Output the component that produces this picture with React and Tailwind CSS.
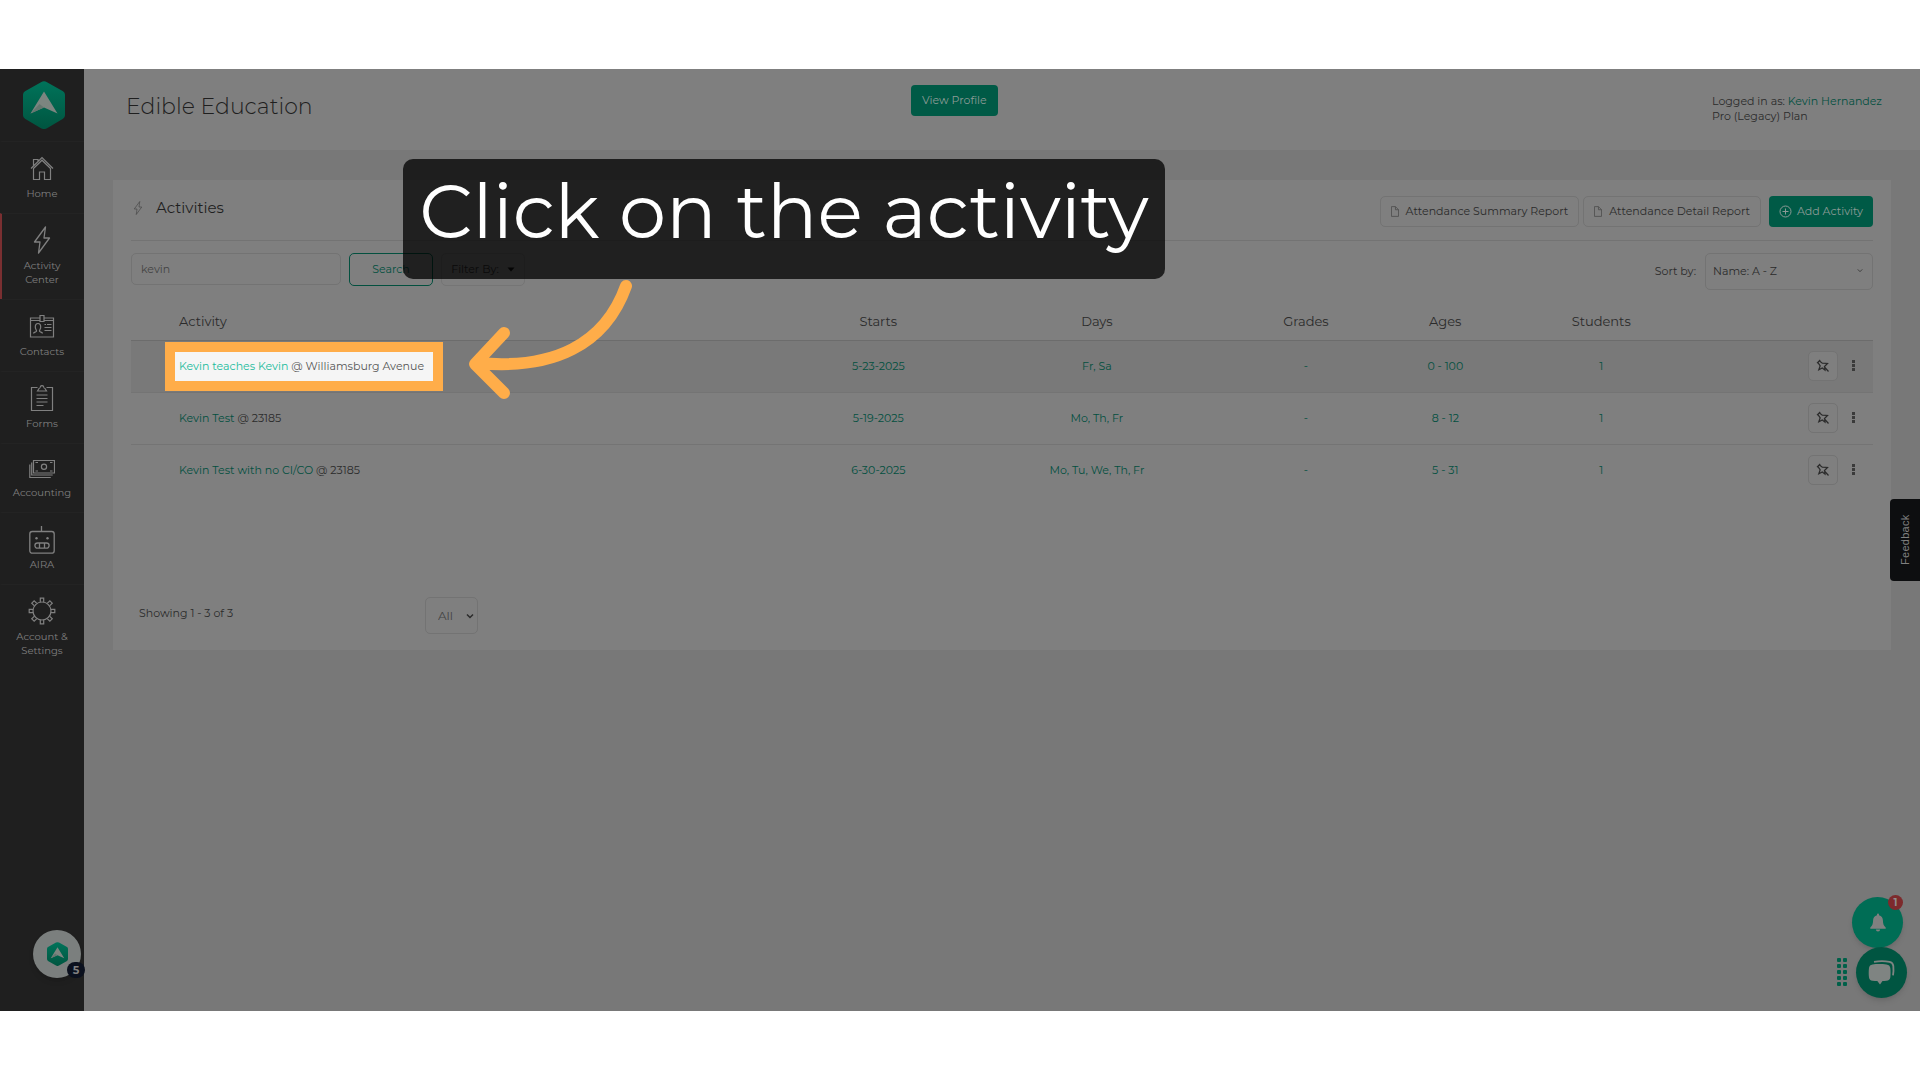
import { useState } from 'react';

const navItems = [
  { label: 'Home', icon: HomeIcon },
  { label: 'Activity Center', icon: BoltIcon, active: true },
  { label: 'Contacts', icon: ContactsIcon },
  { label: 'Forms', icon: FormsIcon },
  { label: 'Accounting', icon: MoneyIcon, short: true },
  { label: 'AIRA', icon: RobotIcon },
  { label: 'Account & Settings', icon: GearIcon },
];

const activities = [
  { name: 'Kevin teaches Kevin', place: 'Williamsburg Avenue', starts: '5-23-2025', days: 'Fr, Sa', grades: '-', ages: '0 - 100', students: '1', highlighted: true },
  { name: 'Kevin Test', place: '23185', starts: '5-19-2025', days: 'Mo, Th, Fr', grades: '-', ages: '8 - 12', students: '1' },
  { name: 'Kevin Test with no CI/CO', place: '23185', starts: '6-30-2025', days: 'Mo, Tu, We, Th, Fr', grades: '-', ages: '5 - 31', students: '1' },
];

function HomeIcon() {
  return (
    <svg width="24" height="26" viewBox="0 0 24 26" fill="none" stroke="currentColor" strokeWidth="1.2">
      <path d="M1 13.5 12 2.5l11 11M3.2 13.8 12 5.2l8.8 8.6M3.5 10.5V4.5H8v1.8M3.5 13.5v11h6V17h5v7.500h6v-11" />
    </svg>
  );
}

function BoltIcon({ className = 'h-7 w-[18px]' }) {
  return (
    <svg className={className} viewBox="0 0 18 28" fill="none" stroke="currentColor" strokeWidth="1.3" strokeLinejoin="round">
      <path d="M12.5 1 1.5 16H7L5.5 27l11-15H11z" />
    </svg>
  );
}

function ContactsIcon() {
  return (
    <svg width="26" height="26" viewBox="0 0 26 26" fill="none" stroke="currentColor" strokeWidth="1.2">
      <path d="M11 5H1.5v19h23V5H15M1.5 7.5H11M15 7.5h9.5M11 2.500h4v6h-4zM15.500 11.5H17M18 11.5h4.500M15.500 14.500h7M15.500 17.500h7" />
      <path d="M4.500 20.500c0-1.500 2.500-1.200 3-2.200.3-1-1.200-2-1.200-4.300 0-2 1-3.500 2.700-3.500s2.700 1.500 2.700 3.500c0 2.300-1.500 3.300-1.200 4.300.5 1 3 .7 3 2.200" />
    </svg>
  );
}

function FormsIcon() {
  return (
    <svg width="24" height="28" viewBox="0 0 24 28" fill="none" stroke="currentColor" strokeWidth="1.2">
      <path d="M7.5 3.500h-6v23h21v-23h-6M7.500 7l1.500-2.500c1 0 1.300-1 1.500-2 .4-1.300 2.600-1.300 3 0 .2 1 .5 2 1.500 2L16.500 7zM6.500 11h11M6.500 14.500h11M6.500 18h11M6.500 21.500h7" />
    </svg>
  );
}

function MoneyIcon() {
  return (
    <svg width="26" height="20" viewBox="0 0 26 20" fill="none" stroke="currentColor" strokeWidth="1.2">
      <path d="M4.500 1.500h21V14h-21zM2.700 3.500V16h21M.8 5.500v13h21" />
      <circle cx="15" cy="7.800" r="2.600" />
      <path d="M6.500 3.500H9M21 3.500h2.500M6.500 12H9M21 12h2.500" />
    </svg>
  );
}

function RobotIcon() {
  return (
    <svg width="26" height="29" viewBox="0 0 26 29" fill="none" stroke="currentColor" strokeWidth="1.3">
      <rect x=".8" y="6.500" width="24.400" height="21.700" rx="2.500" />
      <path d="M12.500 1v5.500M8.500 18h9a2.600 2.600 0 0 1 0 5.200h-9a2.600 2.600 0 0 1 0-5.200zM10.500 18v5.200M15.500 18v5.200" />
      <circle cx="7.500" cy="13.300" r="1.200" fill="currentColor" stroke="none" />
      <circle cx="18.500" cy="13.300" r="1.200" fill="currentColor" stroke="none" />
    </svg>
  );
}

function GearIcon() {
  return (
    <svg width="28" height="28" viewBox="0 0 28 28" fill="none" stroke="currentColor" strokeWidth="1.2">
      <circle cx="14" cy="14" r="9" />
      {[0, 45, 90, 135, 180, 225, 270, 315].map((angle) => (
        <path key={angle} d="M12.300 5V1.200h3.400V5" transform={`rotate(${angle} 14 14)`} />
      ))}
    </svg>
  );
}

function FileIcon() {
  return (
    <svg className="h-[11px] w-2 text-[#505050]" viewBox="0 0 9 12" fill="none" stroke="currentColor" strokeWidth="1">
      <path d="M.5.5H5L8.500 4v7.500h-8zM5 .5V4h3.500" />
    </svg>
  );
}

function PinIcon() {
  return (
    <svg width="14" height="14" viewBox="0 0 14 14" fill="none" stroke="currentColor" strokeWidth="1.2">
      <path d="M1 4.200 4.200 1M3.500 2l2.800 2.200 5.200.3-3 3 .5 3.700-2.700-2.200-3.500 1.800 1.400-4L2 3.700M8 7.500l4.500 5" />
    </svg>
  );
}

function Chevron({ className }) {
  return (
    <svg className={className} viewBox="0 0 8 6" fill="none" stroke="currentColor">
      <path d="M1 1.500 4 4.500 7 1.500" />
    </svg>
  );
}

function Logo({ className, id }) {
  return (
    <svg className={className} viewBox="0 0 42 48">
      <defs>
        <linearGradient id={id} x1="0" y1="0" x2="0" y2="1">
          <stop offset="0" stopColor="#00735a" />
          <stop offset="1" stopColor="#005540" />
        </linearGradient>
      </defs>
      <path d="M18 1.200q3-1.700 6 0l16 9q2 1.300 2 3.600v20.400q0 2.300-2 3.600l-16 9.400q-3 1.700-6 0l-16-9.400q-2-1.300-2-3.600V13.800q0-2.300 2-3.600z" fill={`url(#${id})`} />
      <path d="M21 10.500 34.500 32.500 21 26.500 7.500 32.500z" fill="#7c8580" />
      <path d="M21 26.500 7.500 32.500l9-9.500z" fill="#65766f" />
    </svg>
  );
}

function Sidebar() {
  return (
    <aside className="relative flex w-[84px] shrink-0 flex-col bg-[#1f1f1f] text-[#808080]">
      <a href="#" aria-label="Dashboard" className="flex h-[72px] items-center justify-center pl-[3px]">
        <Logo id="logo-main" className="h-12 w-[42px]" />
      </a>
      <nav>
        {navItems.map(({ label, icon: Icon, active, short }) => (
          <a
            key={label}
            href="#"
            className={`flex flex-col items-center border-t border-l-2 border-t-[#232323] pt-3 pr-[14px] pb-3 pl-3 text-center text-[10px] leading-[14px] ${active ? 'border-l-[#7a2f31]' : 'border-l-transparent'}`}
          >
            <span className={`mb-[5px] flex items-center ${short ? 'h-[25px]' : 'h-7'}`}>
              <Icon />
            </span>
            {label}
          </a>
        ))}
      </nav>
      <button aria-label="Resource center" className="absolute bottom-[33px] left-[33px] flex h-12 w-12 items-center justify-center rounded-full bg-[#7b7f7e] shadow-md">
        <Logo id="logo-launcher" className="h-6 w-[21px]" />
        <span className="absolute -right-[4px] bottom-0 flex h-4 w-[18px] items-center justify-center rounded-full bg-[#0b101e] text-[11px] font-bold text-[#808080]">5</span>
      </button>
    </aside>
  );
}

function Header() {
  return (
    <header className="flex h-[81px] items-start bg-[#7f7f7f] pr-[38px]">
      <h1 className="w-[46%] pt-[22px] pl-[42px] text-[22px] leading-[32px] font-light text-[#1f1f1f]">Edible Education</h1>
      <button className="mt-4 h-[31px] rounded-[4px] bg-[#005a46] px-[11px] text-[#8c9a96]">View Profile</button>
      <div className="ml-auto pt-[25px] leading-[15px]">
        <p>Logged in as: <a href="#" className="text-[#03503f]">Kevin Hernandez</a></p>
        <p>Pro (Legacy) Plan</p>
      </div>
    </header>
  );
}

function ActivityRow({ activity }) {
  const { name, place, starts, days, grades, ages, students, highlighted } = activity;
  return (
    <tr className={`h-[52px] border-t ${highlighted ? 'border-[#6c6c6c] bg-[#797979]' : 'border-[#747474]'}`}>
      <td className="pl-12">
        {highlighted ? (
          <div className="relative z-20 -ml-[14px] flex h-[49px] w-[278px] items-center border-[10px] border-[#ffad49] bg-[#f5f5f5] pl-1 whitespace-nowrap text-[#555]">
            <span><a href="#" className="text-[#1abc9c]">{name}</a> @ {place}</span>
          </div>
        ) : (
          <span><a href="#" className="text-[#03503f]">{name}</a> @ {place}</span>
        )}
      </td>
      {[starts, days, grades, ages, students].map((value, i) => (
        <td key={i} className="text-center"><a href="#" className="text-[#03503f]">{value}</a></td>
      ))}
      <td>
        <div className="flex items-center justify-end gap-[14px] pr-[18px]">
          <button aria-label={`Pin ${name}`} className="flex h-[30px] w-[30px] items-center justify-center rounded-[5px] border border-[#737373] bg-[#7f7f7f]">
            <PinIcon />
          </button>
          <button aria-label={`More options for ${name}`} className="flex flex-col gap-px pb-[2px]">
            <span className="h-[3px] w-[3px] bg-[#3a3a3a]" />
            <span className="h-[3px] w-[3px] bg-[#3a3a3a]" />
            <span className="h-[3px] w-[3px] bg-[#3a3a3a]" />
          </button>
        </div>
      </td>
    </tr>
  );
}

function Callout() {
  return (
    <div className="pointer-events-none absolute top-[90px] left-[403px] z-30">
      <div className="flex h-[120px] w-[762px] items-start justify-center rounded-[10px] bg-black/75">
        <p className="text-[75px] leading-[104px] whitespace-nowrap text-white">Click on the activity</p>
      </div>
      <svg className="absolute top-[120px] left-[60px]" width="180" height="125" viewBox="463 279 180 125" fill="none" stroke="#ffad49" strokeWidth="12" strokeLinecap="round" strokeLinejoin="round">
        <path d="M626 286C605 345 553 370 478 363M504 333 475 364 504 393" />
      </svg>
    </div>
  );
}

export default function App() {
  const [query, setQuery] = useState('kevin');
  const [sort, setSort] = useState('az');

  return (
    <div className="flex min-h-screen flex-col bg-white py-[69px] font-['Montserrat','Inter',sans-serif] text-[11px] text-[#2b2b2b]">
      <div className="relative flex flex-1 bg-[#787878]">
        <Sidebar />
        <div className="min-w-0 flex-1">
          <Header />
          <main className="mx-[29px] mt-[30px] bg-[#7f7f7f] px-[18px] pt-4 pb-4">
            <div className="flex h-[45px] items-start border-b border-[#737373]">
              <h2 className="flex h-6 flex-1 items-center gap-[13px] pl-[2px] text-[15px] text-[#1f1f1f]">
                <BoltIcon className="h-[14px] w-[10px] text-[#444]" />
                Activities
              </h2>
              <div className="flex gap-1">
                <button className="flex h-[31px] items-center gap-[7px] rounded-[5px] border border-[#737373] px-[10px]"><FileIcon />Attendance Summary Report</button>
                <button className="flex h-[31px] items-center gap-[7px] rounded-[5px] border border-[#737373] px-[10px]"><FileIcon />Attendance Detail Report</button>
                <button className="ml-1 flex h-[31px] items-center gap-[5px] rounded-[4px] bg-[#005a46] px-[10px] text-[#8c9a96]">
                  <svg width="13" height="13" viewBox="0 0 13 13" fill="none" stroke="currentColor">
                    <circle cx="6.500" cy="6.500" r="5.500" />
                    <path d="M6.500 3.500v6M3.500 6.500h6" />
                  </svg>
                  Add Activity
                </button>
              </div>
            </div>

            <div className="flex items-start pt-3">
              <input
                aria-label="Search activities"
                value={query}
                onChange={(e) => setQuery(e.target.value)}
                className="h-8 w-[210px] rounded-[5px] border border-[#737373] px-[9px] text-[#444] outline-none"
              />
              <button className="ml-2 h-[33px] w-[84px] rounded-[5px] border border-[#03503f] text-[#03503f]">Search</button>
              <button className="ml-2 flex h-[33px] w-[84px] items-center justify-center gap-2 rounded-[5px] border border-[#757575] whitespace-nowrap">
                Filter By:
                <svg width="8" height="5" viewBox="0 0 8 5"><path d="M.5.5h7L4 4.500z" fill="#111" /></svg>
              </button>
              <div className="ml-auto flex items-center gap-[9px]">
                <label htmlFor="sort">Sort by:</label>
                <div className="relative">
                  <select id="sort" value={sort} onChange={(e) => setSort(e.target.value)} className="h-[37px] w-[168px] appearance-none rounded-[5px] border border-[#737373] px-[7px]">
                    <option value="az">Name: A - Z</option>
                    <option value="za">Name: Z - A</option>
                  </select>
                  <Chevron className="pointer-events-none absolute top-[15px] right-[10px] h-[5px] w-[6px]" />
                </div>
              </div>
            </div>

            <table className="w-full table-fixed border-collapse">
              <colgroup>
                <col className="w-[37.4%]" />
                <col className="w-[11%]" />
                <col className="w-[14.1%]" />
                <col className="w-[9.9%]" />
                <col className="w-[6.1%]" />
                <col className="w-[11.8%]" />
                <col />
              </colgroup>
              <thead>
                <tr className="h-[50px] text-[13px]">
                  <th className="pt-[14px] pl-12 text-left font-normal">Activity</th>
                  <th className="pt-[14px] font-normal">Starts</th>
                  <th className="pt-[14px] font-normal">Days</th>
                  <th className="pt-[14px] font-normal">Grades</th>
                  <th className="pt-[14px] font-normal">Ages</th>
                  <th className="pt-[14px] font-normal">Students</th>
                  <td />
                </tr>
              </thead>
              <tbody>
                {activities.map((activity) => (
                  <ActivityRow key={activity.name} activity={activity} />
                ))}
              </tbody>
            </table>

            <div className="flex items-start pt-[101px] pl-2">
              <p className="w-[286px] pt-[7px] leading-[18px]">Showing 1 - 3 of 3</p>
              <div className="relative">
                <select aria-label="Rows per page" defaultValue="all" className="h-[37px] w-[53px] appearance-none rounded-[5px] border border-[#737373] px-3 text-[12px] text-[#444]">
                  <option value="all">All</option>
                  <option value="25">25</option>
                </select>
                <Chevron className="pointer-events-none absolute top-4 right-1 h-[6px] w-2 stroke-[1.5]" />
              </div>
            </div>
          </main>
        </div>

        <Callout />

        <button className="absolute top-[430px] right-0 flex h-[82px] w-[30px] rotate-180 items-center justify-center rounded-r-[4px] bg-[#0d0e10] font-['Liberation_Sans',sans-serif] text-[11px] tracking-wide text-[#808080] [writing-mode:vertical-rl]">
          Feedback
        </button>

        <button aria-label="Notifications" className="absolute right-[17px] bottom-[63px] flex h-[51px] w-[51px] items-center justify-center rounded-full bg-[#006d55] shadow-md">
          <svg width="16" height="19" viewBox="0 0 16 19" fill="#808080">
            <path d="M8 .5a1 1 0 0 1 1 1v.8c2.500.5 3.800 2.400 3.900 5 .1 3.500.6 5.500 2.800 7.200v1.200H.3v-1.200c2.200-1.700 2.700-3.700 2.800-7.200.1-2.600 1.400-4.500 3.900-5v-.8a1 1 0 0 1 1-1zM5.900 16.500h4.200a2.100 2.100 0 0 1-4.200 0z" />
          </svg>
          <span className="absolute top-[-2px] right-0 flex h-[15px] w-[15px] items-center justify-center rounded-full bg-[#7d2a2c] text-[10px] font-bold text-[#8d8d8d]">1</span>
        </button>
        <button aria-label="Chat" className="absolute right-[13px] bottom-[13px] flex h-[51px] w-[51px] items-center justify-center rounded-full bg-[#005541] shadow-md">
          <svg width="28" height="27" viewBox="0 0 28 27" fill="#7f8482">
            <path d="M4.500 5.500c4-.6 9-.6 14 0 2.300.3 3.500 1.500 3.800 3.500.4 3 .4 6.500 0 9.500-.3 2-1.500 3-3.800 3.300-1.500.2-3 .3-4 .3L12 25.500 9.300 22.100c-1.500 0-3.300-.1-4.800-.3C2.300 21.500 1.300 20.500 1 18.500c-.4-3-.4-6.500 0-9.500.3-2 1.300-3.200 3.500-3.500z" />
            <path d="M6 2.800c5-.8 11-.8 15.500 0 2.500.5 3.500 2 3.800 4 .3 3 .3 6-.3 9.500" fill="none" stroke="#7f8482" strokeWidth="1.800" />
          </svg>
        </button>
        <div className="absolute right-[73px] bottom-[25px] grid grid-cols-2 gap-[2px]">
          {Array.from({ length: 10 }, (_, i) => (
            <span key={i} className="h-1 w-1 rounded-[1px] bg-[#006049]" />
          ))}
        </div>
      </div>
    </div>
  );
}
